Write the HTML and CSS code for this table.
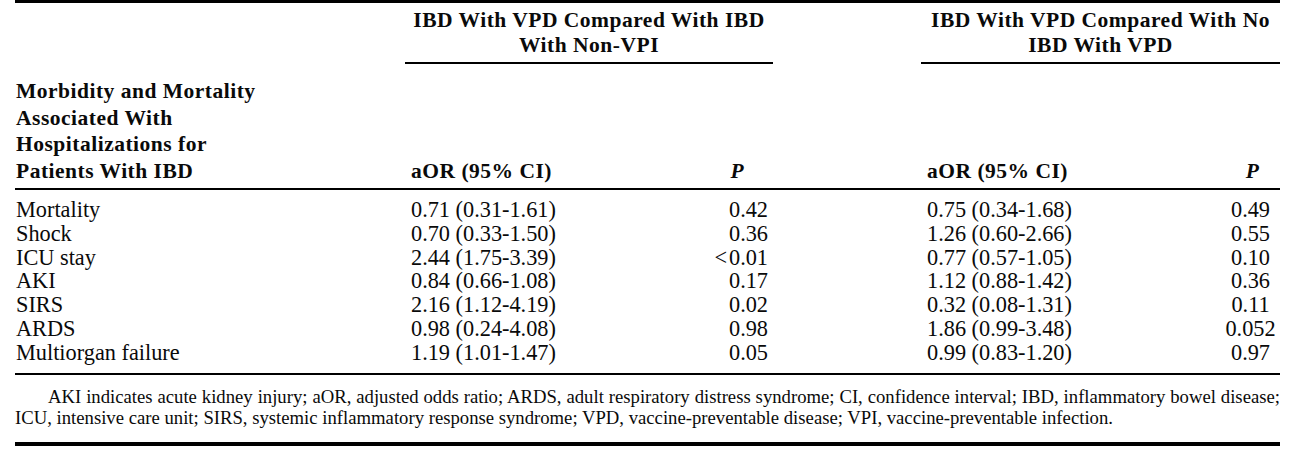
FILE: index.html
```html
<!DOCTYPE html>
<html lang="en">
<head>
<meta charset="utf-8">
<title>Morbidity and Mortality Associated With Hospitalizations for Patients With IBD</title>
<link rel="stylesheet" href="styles.css">
</head>
<body>
<div class="page">
  <table class="results">
    <colgroup>
      <col class="c-stub">
      <col class="c-aor1">
      <col class="c-p1">
      <col class="c-gap">
      <col class="c-aor2">
      <col class="c-p2">
    </colgroup>
    <thead>
      <tr class="spanner-row">
        <th class="blank"></th>
        <th class="spanner" colspan="2">IBD With VPD Compared With IBD<br>With Non-VPI</th>
        <th class="blank"></th>
        <th class="spanner" colspan="2">IBD With VPD Compared With No<br>IBD With VPD</th>
      </tr>
      <tr class="label-row">
        <th class="stub">Morbidity and Mortality<br>Associated With<br>Hospitalizations for<br>Patients With IBD</th>
        <th class="aor">aOR (95% CI)</th>
        <th class="p p-right"><i>P</i></th>
        <th class="blank"></th>
        <th class="aor">aOR (95% CI)</th>
        <th class="p p-center"><i>P</i></th>
      </tr>
    </thead>
    <tbody>
      <tr>
        <td class="stub">Mortality</td>
        <td class="aor">0.71 (0.31-1.61)</td>
        <td class="p1">0.42</td>
        <td></td>
        <td class="aor">0.75 (0.34-1.68)</td>
        <td class="p2">0.49</td>
      </tr>
      <tr>
        <td class="stub">Shock</td>
        <td class="aor">0.70 (0.33-1.50)</td>
        <td class="p1">0.36</td>
        <td></td>
        <td class="aor">1.26 (0.60-2.66)</td>
        <td class="p2">0.55</td>
      </tr>
      <tr>
        <td class="stub">ICU stay</td>
        <td class="aor">2.44 (1.75-3.39)</td>
        <td class="p1">&lt;&#8202;0.01</td>
        <td></td>
        <td class="aor">0.77 (0.57-1.05)</td>
        <td class="p2">0.10</td>
      </tr>
      <tr>
        <td class="stub">AKI</td>
        <td class="aor">0.84 (0.66-1.08)</td>
        <td class="p1">0.17</td>
        <td></td>
        <td class="aor">1.12 (0.88-1.42)</td>
        <td class="p2">0.36</td>
      </tr>
      <tr>
        <td class="stub">SIRS</td>
        <td class="aor">2.16 (1.12-4.19)</td>
        <td class="p1">0.02</td>
        <td></td>
        <td class="aor">0.32 (0.08-1.31)</td>
        <td class="p2">0.11</td>
      </tr>
      <tr>
        <td class="stub">ARDS</td>
        <td class="aor">0.98 (0.24-4.08)</td>
        <td class="p1">0.98</td>
        <td></td>
        <td class="aor">1.86 (0.99-3.48)</td>
        <td class="p2">0.052</td>
      </tr>
      <tr>
        <td class="stub">Multiorgan failure</td>
        <td class="aor">1.19 (1.01-1.47)</td>
        <td class="p1">0.05</td>
        <td></td>
        <td class="aor">0.99 (0.83-1.20)</td>
        <td class="p2">0.97</td>
      </tr>
    </tbody>
  </table>
  <div class="footnote">
    <span class="fn-line fn-first">AKI indicates acute kidney injury; aOR, adjusted odds ratio; ARDS, adult respiratory distress syndrome; CI, confidence interval; IBD, inflammatory bowel disease;</span>
    <span class="fn-line">ICU, intensive care unit; SIRS, systemic inflammatory response syndrome; VPD, vaccine-preventable disease; VPI, vaccine-preventable infection.</span>
  </div>
</div>
</body>
</html>
```
FILE: styles.css
```css
html, body {
  margin: 0;
  padding: 0;
  background: #ffffff;
}

body {
  font-family: "Liberation Serif", "Times New Roman", serif;
  color: #0a0a0a;
}

.page {
  width: 1265px;
  padding: 0 15px;
}

.results {
  width: 1265px;
  table-layout: fixed;
  border-collapse: separate;
  border-spacing: 0;
  border-top: 3px solid #000;
}

.c-stub { width: 390px; }
.c-aor1 { width: 218px; }
.c-p1 { width: 150px; }
.c-gap { width: 148px; }
.c-aor2 { width: 300px; }
.c-p2 { width: 59px; }

th, td {
  padding: 0;
  margin: 0;
}

thead th {
  font-weight: bold;
  font-size: 21.5px;
  letter-spacing: 0.5px;
  text-align: left;
  white-space: nowrap;
}

.spanner-row th {
  line-height: 25px;
  padding-top: 5px;
  padding-bottom: 4px;
  vertical-align: top;
}

.spanner-row .spanner {
  text-align: center;
  border-bottom: 2px solid #000;
}

.label-row th {
  line-height: 26.5px;
  padding-top: 14px;
  padding-bottom: 4px;
  vertical-align: bottom;
  border-bottom: 2px solid #000;
}

.label-row .stub {
  padding-left: 1px;
}

.label-row .aor {
  padding-left: 6px;
}

.label-row .p i {
  font-style: italic;
  font-weight: bold;
}

.label-row .p-right {
  text-align: right;
  padding-right: 29px;
}

.label-row .p-center {
  text-align: center;
  padding-left: 4px;
}

tbody td {
  font-size: 22.3px;
  line-height: 23.8px;
  white-space: nowrap;
  vertical-align: top;
}

tbody tr:first-child td {
  padding-top: 8px;
}

tbody tr:last-child td {
  padding-bottom: 8px;
  border-bottom: 2px solid #000;
}

tbody .stub {
  padding-left: 1px;
}

tbody .aor {
  padding-left: 6px;
}

tbody .p1 {
  text-align: right;
  padding-right: 5px;
}

tbody .p2 {
  text-align: center;
}

.footnote {
  font-size: 18.7px;
  line-height: 21px;
  margin-top: 11px;
  padding-bottom: 14px;
  border-bottom: 4px solid #000;
}

.fn-line {
  display: block;
  text-align: left;
  white-space: nowrap;
}

.fn-first {
  padding-left: 33px;
  text-align: justify;
  text-align-last: justify;
  white-space: normal;
}
```
